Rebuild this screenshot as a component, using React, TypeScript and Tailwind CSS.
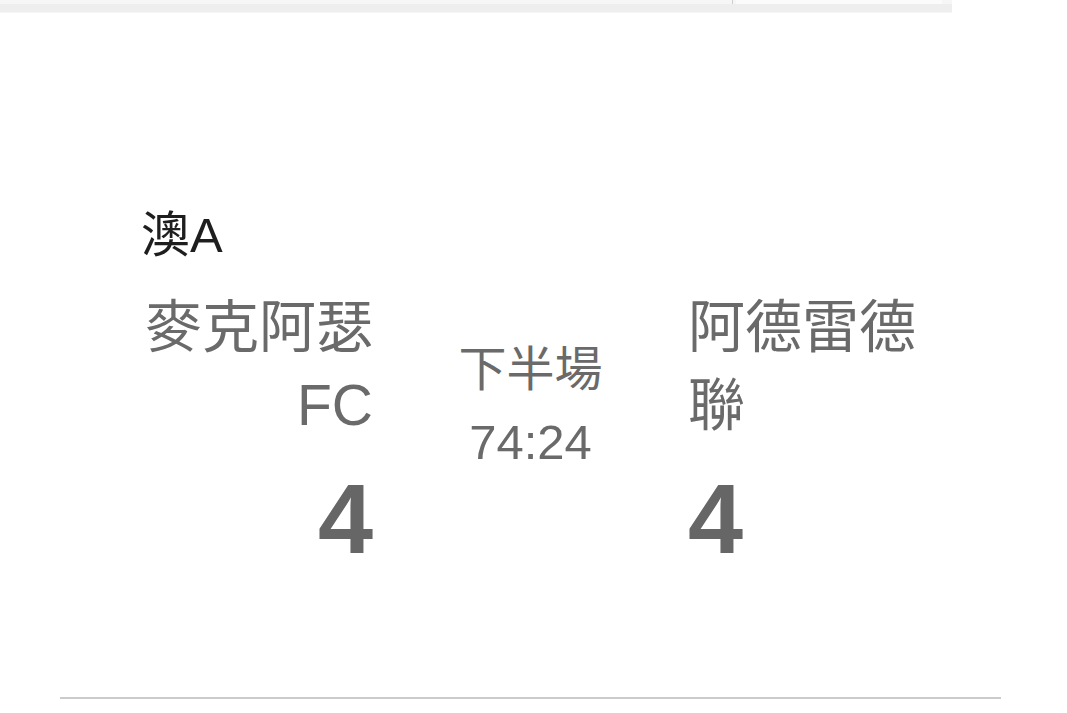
import React from "react";

const FONT = { fontFamily: '"Liberation Sans", "Noto Sans CJK TC", sans-serif' };

export default function App() {
  return (
    <div className="w-[1067px] h-[713px] bg-white overflow-hidden" style={FONT}>
      {/* top cut-off bar */}
      <div className="w-[952px] h-[13px] bg-[#f6f6f6] flex flex-col">
        <div className="h-[4px] flex">
          <div className="w-[732px]" />
          <div className="w-[1px] h-[8px] bg-[#cfcfcf]" />
          <div className="w-[206px] h-[9px] bg-[#fbfbfb] ml-[3px]" />
        </div>
        <div className="h-[8px] bg-[#eeeeee]" />
      </div>

      <div className="ml-[60px] w-[941px]">
        <div className="pl-[81px] pt-[192px]">
          <div className="text-[49px] leading-[60px] text-[#1e1e1e]">澳A</div>
          <div className="flex items-start mt-[23px]">
            <div className="w-[232px] flex flex-col items-end text-right">
              <div className="text-[57px] leading-[78px] text-[#6a6a6a]">麥克阿瑟FC</div>
              <div className="text-[99px] leading-[100px] font-bold text-[#666666] mt-[25px]">4</div>
            </div>
            <div className="w-[315px] flex flex-col items-center text-center mt-[46px]">
              <div className="text-[48px] leading-[72px] text-[#6a6a6a]">下半場</div>
              <div className="text-[49px] leading-[72px] text-[#6a6a6a]">74:24</div>
            </div>
            <div className="w-[232px] flex flex-col items-start text-left">
              <div className="text-[57px] leading-[78px] text-[#6a6a6a]">阿德雷德聯</div>
              <div className="text-[99px] leading-[100px] font-bold text-[#666666] mt-[25px]">4</div>
            </div>
          </div>
        </div>
        <div className="mt-[128px] h-[2px] bg-[#cbcbcb]" />
      </div>
    </div>
  );
}
